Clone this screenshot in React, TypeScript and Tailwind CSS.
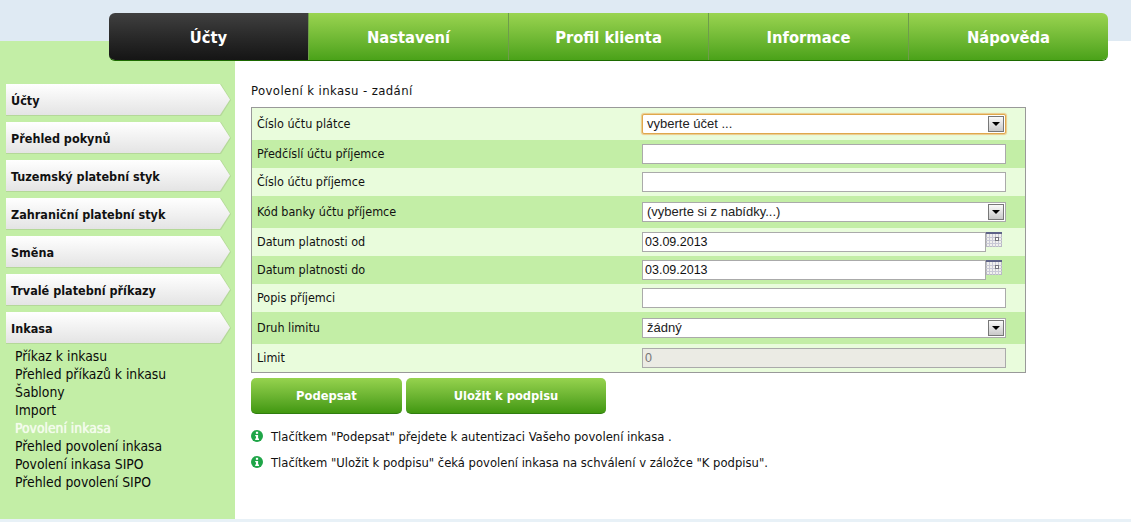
const tahoma = "font-['DejaVu_Sans_Condensed','DejaVu_Sans',sans-serif]"

const navItems = ['Nastavení', 'Profil klienta', 'Informace', 'Nápověda']
const sideItems = ['Účty', 'Přehled pokynů', 'Tuzemský platební styk', 'Zahraniční platební styk', 'Směna', 'Trvalé platební příkazy', 'Inkasa']
const subItems = ['Příkaz k inkasu', 'Přehled příkazů k inkasu', 'Šablony', 'Import', 'Povolení inkasa', 'Přehled povolení inkasa', 'Povolení inkasa SIPO', 'Přehled povolení SIPO']

function CalendarIcon() {
  return (
    <svg width="16" height="16" viewBox="0 0 16 16" className="shrink-0">
      <rect x="0.5" y="0.5" width="15" height="14" fill="#f1f1ee" stroke="#b9b9c4" />
      <rect x="0" y="0" width="16" height="2" fill="#5f6488" />
      <path d="M0 5.5H16M0 8.5H16M0 11.5H16M3.5 2V15M6.5 2V15M9.5 2V15M12.5 2V15" stroke="#c9c9d6" strokeWidth="1" />
      <rect x="9.5" y="5.5" width="3" height="3" fill="#fff" stroke="#77777f" />
    </svg>
  )
}

function InfoIcon() {
  return (
    <svg width="12" height="12" viewBox="0 0 12 12" className="mt-[-2px] shrink-0">
      <circle cx="6" cy="6" r="6" fill="#1fa548" />
      <rect x="4.9" y="1.8" width="2.2" height="2" fill="#fff" />
      <path d="M4.2 5H7.1V8.6H8V10H4.2V8.6H5V6.3H4.2Z" fill="#fff" />
    </svg>
  )
}

function Select({ value, focus }: { value: string; focus?: boolean }) {
  return (
    <div className={`flex h-5 w-[364px] items-center justify-between bg-white pl-1 pr-px font-['Liberation_Sans',sans-serif] text-[13px] text-[#222] ${focus ? 'rounded-[2px] border border-[#dfa84c] shadow-[0_0_1px_1px_#ecc98a]' : 'border border-[#aaa]'}`}>
      <span>{value}</span>
      <span className="flex h-4 w-4 items-center justify-center border border-[#777] bg-gradient-to-b from-[#fafafa] to-[#c9c9c9]">
        <span className="h-0 w-0 border-x-[4px] border-t-[4px] border-x-transparent border-t-black" />
      </span>
    </div>
  )
}

function TextInput({ value = '', disabled, date }: { value?: string; disabled?: boolean; date?: boolean }) {
  return (
    <input
      readOnly
      value={value}
      className={`h-5 border border-[#aaa] px-[2px] font-['Liberation_Sans',sans-serif] text-[12.5px] outline-none ${date ? 'w-[344px] text-[#111]' : 'w-[364px]'} ${disabled ? 'bg-[#ebebe4] text-[#777]' : 'bg-white'}`}
    />
  )
}

function DateField({ value }: { value: string }) {
  return (
    <div className="flex items-start">
      <TextInput value={value} date />
      <CalendarIcon />
    </div>
  )
}

const rows = [
  { label: 'Číslo účtu plátce', h: 'h-8', dark: false, field: <Select value="vyberte účet ..." focus /> },
  { label: 'Předčíslí účtu příjemce', h: 'h-7', dark: true, field: <TextInput /> },
  { label: 'Číslo účtu příjemce', h: 'h-7', dark: false, field: <TextInput /> },
  { label: 'Kód banky účtu příjemce', h: 'h-8', dark: true, field: <Select value="(vyberte si z nabídky...)" /> },
  { label: 'Datum platnosti od', h: 'h-7', dark: false, field: <DateField value="03.09.2013" /> },
  { label: 'Datum platnosti do', h: 'h-7', dark: true, field: <DateField value="03.09.2013" /> },
  { label: 'Popis příjemci', h: 'h-7', dark: false, field: <TextInput /> },
  { label: 'Druh limitu', h: 'h-8', dark: true, field: <Select value="žádný" /> },
  { label: 'Limit', h: 'h-7', dark: false, field: <TextInput value="0" disabled /> },
]

export default function App() {
  return (
    <div className={`flex h-[522px] w-[1131px] flex-col overflow-hidden bg-white ${tahoma}`}>
      <header className="relative z-10 h-[41px] shrink-0 bg-[#dfeaf3] pl-[109px] pt-[13px]">
        <nav className="flex h-12 w-[999px] overflow-hidden rounded-[6px] border-b border-[#1c6a00] text-[16.4px] font-bold text-white">
          <a className="flex w-[199px] items-center justify-center bg-gradient-to-b from-[#404040] to-[#151515] pt-[3px]">Účty</a>
          {navItems.map((item) => (
            <a key={item} className="flex w-[200px] items-center justify-center border-l border-[#6f9c4c] bg-gradient-to-b from-[#9ad450] to-[#4aa218] pt-[3px] first:border-l-0">
              {item}
            </a>
          ))}
        </nav>
      </header>

      <div className="flex flex-1">
        <aside className="w-[235px] shrink-0 bg-[#c3eea6] px-[6px] pt-[43px]">
          <ul className="flex flex-col gap-[6px]">
            {sideItems.map((item) => (
              <li key={item} className="h-8 w-[225px] bg-[#b4d898] [clip-path:polygon(0_0,215px_0,100%_50%,215px_100%,0_100%)]">
                <div className="flex h-[31px] w-[224px] items-center bg-gradient-to-b from-white to-[#e4e4e4] pl-[5px] pt-[3px] text-[12.5px] font-bold text-[#111] [clip-path:polygon(0_0,214px_0,100%_50%,214px_100%,0_100%)]">
                  {item}
                </div>
              </li>
            ))}
          </ul>
          <ul className="mt-[3px] pl-[9px] text-[13.8px] leading-[18px] text-[#0a0a0a]">
            {subItems.map((item) => (
              <li key={item} className={item === 'Povolení inkasa' ? 'text-[#f4fcec] [text-shadow:0_0_1px_#ffffff]' : ''}>
                {item}
              </li>
            ))}
          </ul>
        </aside>

        <main className="flex-1 pl-4 pt-[42px] text-[12.5px] text-[#111]">
          <h1 className="h-[24px] text-[13px] leading-[15px] tracking-[0.4px] text-[#111]">Povolení k inkasu - zadání</h1>
          <div className="w-[775px] border border-[#999]">
            {rows.map((row) => (
              <div key={row.label} className={`flex items-center pl-[5px] ${row.h} ${row.dark ? 'bg-[#c3eea6]' : 'bg-[#e9fcdc]'}`}>
                <span className="w-[385px] shrink-0 pt-px">{row.label}</span>
                {row.field}
              </div>
            ))}
          </div>
          <div className="mt-[5px] flex gap-1 text-[12.8px] font-bold text-white">
            <button className="h-9 w-[151px] rounded-[5px] border-b border-[#2f7d10] bg-gradient-to-b from-[#96d34e] to-[#41980f] pt-px">Podepsat</button>
            <button className="h-9 w-[200px] rounded-[5px] border-b border-[#2f7d10] bg-gradient-to-b from-[#96d34e] to-[#41980f] pt-px">Uložit k podpisu</button>
          </div>
          <div className="mt-[15px] flex flex-col gap-[11px] text-[12.9px] leading-[15px]">
            <p className="flex items-center gap-2">
              <InfoIcon />
              Tlačítkem "Podepsat" přejdete k autentizaci Vašeho povolení inkasa .
            </p>
            <p className="flex items-center gap-2">
              <InfoIcon />
              Tlačítkem "Uložit k podpisu" čeká povolení inkasa na schválení v záložce "K podpisu".
            </p>
          </div>
        </main>
      </div>
      <div className="h-[3px] shrink-0 bg-[#e8f1f7]" />
    </div>
  )
}
